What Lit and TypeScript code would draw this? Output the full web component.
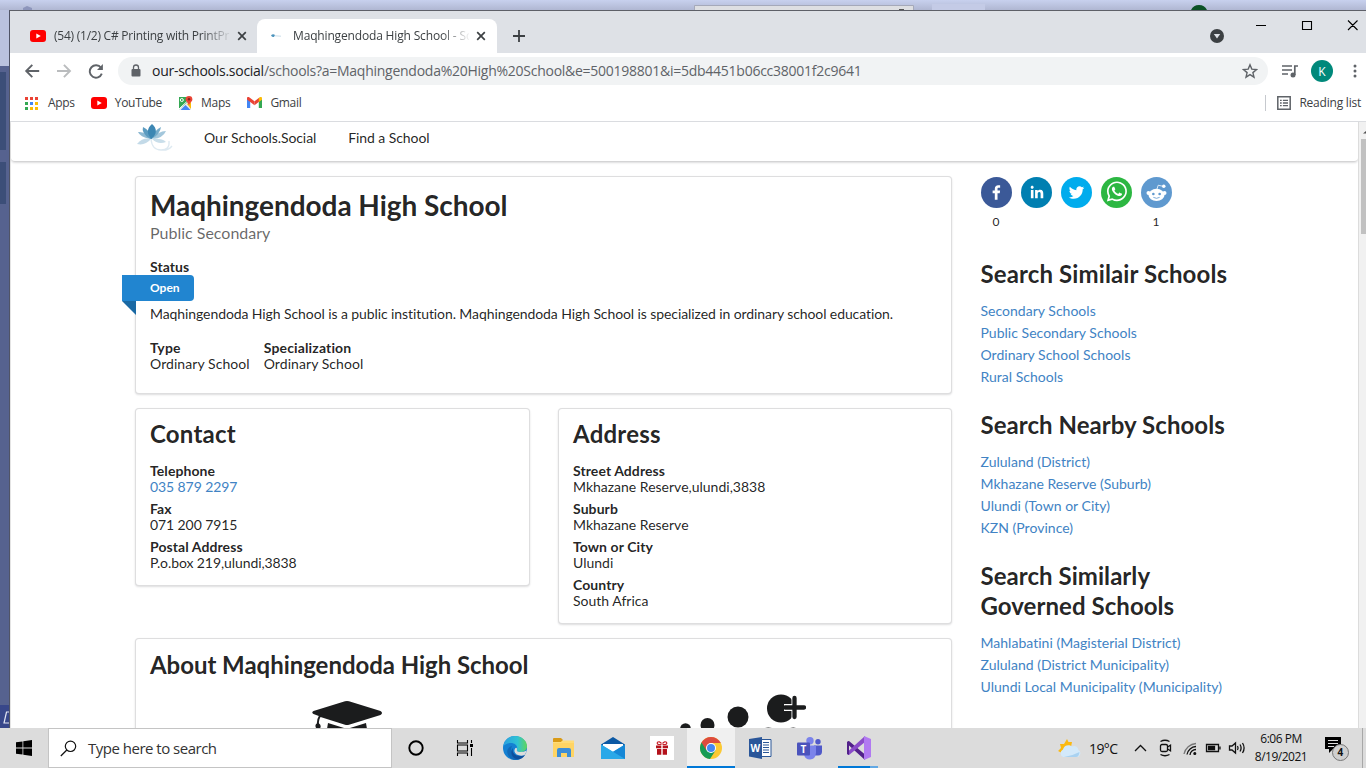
import { LitElement, html, css, svg } from "lit";
import { customElement } from "lit/decorators.js";

const youtube = html`<svg class="yt" width="16" height="12" viewBox="0 0 16 12"><rect width="16" height="12" rx="3" fill="#f00"/><path d="M6.3 3.4v5.2L10.8 6z" fill="#fff"/></svg>`;
const closeX = html`<svg width="10" height="10" viewBox="0 0 10 10"><path d="M1.2 1.2l7.6 7.6M8.8 1.2L1.2 8.8" stroke="#3c4043" stroke-width="1.7"/></svg>`;

@customElement("browser-tabs")
class BrowserTabs extends LitElement {
  static styles = css`
    :host { display: flex; height: 42px; background: #dee1e6; font: 12px "Open Sans", sans-serif; color: #3c4043; }
    .tab { display: flex; align-items: center; height: 34px; margin-top: 8px; box-sizing: border-box; }
    .first { width: 247px; padding-left: 20px; }
    .active { width: 240px; padding-left: 14px; background: #fff; border-radius: 8px 8px 0 0; }
    .title { width: 176px; margin-left: 8px; overflow: hidden; white-space: nowrap; letter-spacing: -0.24px; line-height: 20px;
      -webkit-mask-image: linear-gradient(90deg, #000 148px, transparent 178px); mask-image: linear-gradient(90deg, #000 148px, transparent 178px); }
    .active .title { margin-left: 6px; letter-spacing: -0.16px; }
    .x { display: flex; margin-left: 7px; }
    .plus { margin: 19px 0 0 16px; }
    .fill { flex: 1; }
    .round { margin: 18px 30px 0 0; }
    .caps { margin: 9px 8px 0 0; }
  `;
  render() {
    return html`
      <div class="tab first">${youtube}<span class="title">(54) (1/2) C# Printing with PrintPr</span><span class="x">${closeX}</span></div>
      <div class="tab active">
        <svg width="16" height="16" viewBox="0 0 16 16"><path d="M0 7.2Q2 5.6 4 7L3 9Q1 9.300 0 7.200z" fill="#4d94bd"/><path d="M4 7.800l6 .4" stroke="#c9dde9"/></svg>
        <span class="title">Maqhingendoda High School - So</span><span class="x">${closeX}</span>
      </div>
      <svg class="plus" width="12" height="12" viewBox="0 0 12 12"><path d="M6 0v12M0 6h12" stroke="#3c4043" stroke-width="1.8"/></svg>
      <span class="fill"></span>
      <svg class="round" width="14" height="14" viewBox="0 0 14 14"><circle cx="7" cy="7" r="7" fill="#3c4043"/><path d="M3.800 5h6.400L7 9.600z" fill="#dee1e6"/></svg>
      <svg class="caps" width="104" height="12" viewBox="0 0 104 12"><path d="M2 5.500h10M48.500 1.500h9v8h-9z M94 .5l9.500 9.500M103.500 .5L94 10" fill="none" stroke="#000" stroke-width="1.100"/></svg>
    `;
  }
}

@customElement("browser-bars")
class BrowserBars extends LitElement {
  static styles = css`
    :host { display: block; height: 68px; background: #fff; border-bottom: 1px solid #dadce0; font: 12px "Open Sans", sans-serif; color: #3c4043; }
    .toolbar { display: flex; align-items: center; height: 36px; }
    .toolbar svg { flex: none; }
    .nav { margin-left: 14px; }
    .omni { display: flex; align-items: center; width: 1150px; flex: none; height: 28px; border-radius: 14px; background: #f1f3f4; margin-left: 14px; box-sizing: border-box; padding: 0 10px 0 13px; }
    .url { margin-left: 11px; flex: 1; font-size: 14px; letter-spacing: -0.26px; color: #5f6368; line-height: 26px; white-space: nowrap; }
    .url b { font-weight: 400; color: #202124; }
    .music { margin-left: 14px; }
    .avatar { display: grid; place-items: center; width: 22px; height: 22px; border-radius: 50%; background: #00897b; color: #fff; margin-left: 12px; font-size: 12px; }
    .dots { margin-left: 19px; }
    .marks { display: flex; align-items: center; height: 28px; box-sizing: border-box; white-space: nowrap; line-height: 20px; }
    .marks svg { flex: none; }
    .apps { margin: 0 10px 0 15px; }
    .mark { display: flex; align-items: center; gap: 8px; letter-spacing: -0.3px; }
    .m1 { margin-left: 16px; }
    .m2 { margin-left: 16px; }
    .m3 { margin-left: 17px; }
    .fill { flex: 1; }
    .sep { width: 1px; height: 16px; background: #c6c9ce; margin-right: 11px; }
    .reading { display: flex; align-items: center; gap: 8px; margin-right: 5px; letter-spacing: -0.22px; }
  `;
  render() {
    const cols = ["#ea4335", "#ea4335", "#ea4335", "#34a853", "#4285f4", "#fbbc05", "#34a853", "#fbbc05", "#fbbc05"];
    return html`
      <div class="toolbar">
        <svg class="nav" width="64" height="16" viewBox="0 0 64 16"><g fill="none" stroke="#5f6368" stroke-width="1.900"><path d="M15.200 8H2.500M8.300 1.800L2.200 8l6.100 6.200"/><path d="M33 8h12.700M39.900 1.800L46 8l-6.100 6.200" stroke="#babcbe"/></g></svg>
        <svg width="16" height="16" viewBox="0 0 16 16"><path d="M13.200 4A6.200 6.200 0 1 0 14 9.800" transform="translate(-.2 .8)" fill="none" stroke="#5f6368" stroke-width="1.900"/><path d="M14.900 1v6H9z" fill="#5f6368"/></svg>
        <div class="omni">
          <svg width="10" height="14" viewBox="0 0 10 14"><rect x=".5" y="5" width="9" height="7.500" rx="1" fill="#5f6368"/><path d="M2.500 5.500V3.500a2.500 2.500 0 0 1 5 0v2" fill="none" stroke="#5f6368" stroke-width="1.300"/></svg>
          <span class="url"><b>our-schools.social</b>/schools?a=Maqhingendoda%20High%20School&amp;e=500198801&amp;i=5db4451b06cc38001f2c9641</span>
          <svg width="16" height="16" viewBox="0 0 16 16"><path d="M8 1.800l1.800 4.300 4.700.4-3.600 3.100 1.100 4.600-4-2.500-4 2.500 1.100-4.600-3.600-3.100 4.700-.4z" fill="none" stroke="#5f6368" stroke-width="1.400"/></svg>
        </div>
        <svg class="music" width="17" height="14" viewBox="0 0 17 14"><path d="M0 2h10M0 6h10M0 10h6M12.800 11V2H16" fill="none" stroke="#5f6368" stroke-width="1.700"/><circle cx="11" cy="11" r="2.500" fill="#5f6368"/></svg>
        <span class="avatar">K</span>
        <svg class="dots" width="6" height="16" viewBox="0 0 6 16"><g fill="#5f6368"><circle cx="3" cy="3" r="1.500"/><circle cx="3" cy="8" r="1.500"/><circle cx="3" cy="13" r="1.500"/></g></svg>
      </div>
      <div class="marks">
        <svg class="apps" width="13" height="13" viewBox="0 0 13 13">${cols.map((c, i) => svg`<rect x=${(i % 3) * 5} y=${Math.floor(i / 3) * 5} width="3" height="3" fill=${c}/>`)}</svg>
        <span class="mark">Apps</span>
        <span class="mark m1">${youtube}<span>YouTube</span></span>
        <span class="mark m2">
          <svg width="15" height="14" viewBox="0 0 15 14"><path d="M1 1h8v6L1 13.500z" fill="#34a853"/><path d="M1 13.500L12 4l1 9.500z" fill="#e8eaed"/><path d="M2.500 14l5-5 5 5z" fill="#4285f4"/><path d="M9 8l4 5V6z" fill="#fbbc05"/><path d="M1 13L9.500 5" stroke="#fff" stroke-width="1"/><circle cx="3.800" cy="4" r="1.500" fill="none" stroke="#fff"/><path d="M11 0a3.400 3.400 0 0 1 3.400 3.400C14.400 5.500 11.500 6.500 11 9.500 10.500 6.500 7.600 5.500 7.600 3.400A3.400 3.400 0 0 1 11 0z" fill="#ea4335"/><circle cx="11" cy="3.300" r="1.200" fill="#8a1f17"/></svg>
          <span>Maps</span></span>
        <span class="mark m3">
          <svg width="15" height="12" viewBox="0 0 15 12"><path d="M0 1.500V11h3.200V4z" fill="#4285f4"/><path d="M15 1.500V11h-3.200V4z" fill="#34a853"/><path d="M0 2.500V1.200C0 0 1.500-.2 2.500.5l5 3.800v3.900z" fill="#ea4335"/><path d="M7.500 4.300l5-3.800 .5 3.500-5.500 4.200z" fill="#ea4335"/><path d="M11.800 1v4.100L15 2.800V1.200C15 0 13.500-.2 12.500 .5z" fill="#fbbc05"/></svg>
          <span>Gmail</span></span>
        <span class="fill"></span>
        <span class="sep"></span>
        <span class="reading">
          <svg width="14" height="14" viewBox="0 0 14 14"><path d="M.8 .8h12.400v12.400H.8z" fill="none" stroke="#5f6368" stroke-width="1.500"/><path d="M3 4.300h1.700M3 7h1.700M3 9.700h1.700M5.900 4.300H11M5.900 7H11M5.900 9.700H11" stroke="#5f6368" stroke-width="1.300"/></svg>
          <span>Reading list</span></span>
      </div>`;
  }
}

@customElement("school-page")
class SchoolPage extends LitElement {
  static styles = css`
    :host { display: flex; height: 606px; overflow: hidden; background: #fff; font: 14px/16px Lato, sans-serif; font-variant-ligatures: none; color: rgba(0, 0, 0, 0.87); }
    .view { width: 1348px; box-sizing: border-box; border-left: 1px solid #e4e4e4; flex: none; }
    .menu { display: flex; align-items: center; height: 40px; box-sizing: border-box; border-bottom: 1px solid #d4d4d5; border-radius: 0 0 4px 4px; box-shadow: 0 1px 2px rgba(34, 36, 38, 0.15); padding: 0 0 8px 126px; letter-spacing: -0.08px; }
    .menu span { margin-left: 32px; line-height: 20px; white-space: nowrap; }
    .menu svg { margin-right: -1px; }
    .body { display: flex; padding: 14px 0 0 124px; gap: 28px; }
    .main { width: 817px; flex: none; }
    .card { box-sizing: border-box; border: 1px solid rgba(34, 36, 38, 0.15); border-radius: 4px; box-shadow: 0 1px 2px rgba(34, 36, 38, 0.15); padding: 14px; background: #fff; }
    .intro { height: 218px; }
    h1 { margin: -1px 0 0; font-size: 28px; line-height: 30px; font-weight: 700; letter-spacing: -0.05px; }
    .sub { font-size: 16px; line-height: 20px; color: rgba(0, 0, 0, 0.6); margin: 3px 0 16px; }
    b { font-weight: 700; display: block; letter-spacing: 0.08px; }
    .ribbon { position: relative; width: 72px; height: 26px; box-sizing: border-box; margin-left: -28px; padding-left: 28px; background: #2185d0; color: #fff; font-weight: 700; font-size: 12px; line-height: 26px; border-radius: 0 4px 4px 0; }
    .ribbon::after { content: ""; position: absolute; left: 0; top: 100%; border-style: solid; border-width: 0 14px 14px 0; border-color: transparent #1a69a4 transparent transparent; }
    p { margin: 3px 0 16px; line-height: 20px; white-space: nowrap; letter-spacing: -0.09px; }
    .facts { display: flex; gap: 14px; white-space: nowrap; letter-spacing: 0.07px; }
    .facts b { letter-spacing: 0.15px; }
    .pair { display: grid; grid-template-columns: 395px 394px; gap: 28px; align-items: start; margin: 14px 0; }
    .contact { letter-spacing: -0.09px; }
    h2 { margin: 0; font-size: 24px; line-height: 30px; font-weight: 700; letter-spacing: 0; }
    .card h2 { margin: -3px 0 13px; }
    .pair .card h2 { margin: -4px 0 14px; letter-spacing: 0.22px; }
    .about h2 { letter-spacing: -0.04px; }
    .item { margin-bottom: 6px; }
    .item:last-child { margin-bottom: 0; }
    a { color: #4183c4; }
    .about { height: 160px; }
    .pics { display: grid; grid-template-columns: 1fr 1fr; justify-items: center; }
    .people { margin: -3px 0 0 3px; }
    .side { width: 260px; padding-left: 0.5px; }
    .share { display: flex; gap: 9px; margin: 0 0 2px; }
    .btn { width: 31px; text-align: center; font-size: 12px; line-height: 27px; height: 57px; }
    .btn svg { display: block; margin-top: 0.5px; }
    .side h2 { margin: 22px 0 11px; letter-spacing: 0.05px; }
    .side h2.lead { margin-top: 26px; letter-spacing: 0.12px; }
    .links a { display: block; line-height: 22px; white-space: nowrap; letter-spacing: 0.02px; }
    .scroll { width: 8px; box-sizing: border-box; border-left: 1px solid #dcdcdc; background: #f1f1f1; padding: 17px 0 0 2px; flex: none; position: relative; }
    .thumb { height: 95px; background: #c1c1c1; }
    .arrow { position: absolute; left: 4px; top: 8px; }
  `;
  fields(rows: [string, unknown][]) {
    return rows.map(([k, v]) => html`<div class="item"><b>${k}</b>${v}</div>`);
  }
  links(rows: string[]) {
    return html`<div class="links">${rows.map((r) => html`<a>${r}</a>`)}</div>`;
  }
  shareButton(color: string, glyph: unknown, count = "") {
    return html`<div class="btn"><svg width="31" height="31" viewBox="0 0 64 64"><circle cx="32" cy="32" r="32" fill=${color}/>${glyph}</svg>${count}</div>`;
  }
  render() {
    return html`
      <div class="view">
        <div class="menu">
          <svg width="36" height="28" viewBox="0 0 36 28">
            <path d="M13 15Q3 13 1 8q7-1 12 7z" fill="#8db9d3"/><path d="M16 15Q26 14 29 7q-8 0-13 8z" fill="#a3c7dc"/>
            <path d="M13 15Q4 9 6 3q7 3 9 12z" fill="#5b9bc0"/><path d="M15 15Q23 10 24 3q-7 3-9 12z" fill="#76acca"/>
            <path d="M14.500 15Q7 7 15 0q8 7-.5 15z" fill="#3d87b3"/>
            <path d="M14 15Q6 13 0 20q8 2 14-5z" fill="#c3dae8"/><path d="M15 15q10-1 14 3-8 3-14-3z" fill="#c9deea"/>
            <path d="M14 15q1 11 10 11 9 0 8-9M24 26q7 1 11-4" fill="none" stroke="#dde9f1" stroke-width="1.300"/>
          </svg>
          <span>Our Schools.Social</span><span>Find a School</span>
        </div>
        <div class="body">
          <div class="main">
            <section class="card intro">
              <h1>Maqhingendoda High School</h1>
              <div class="sub">Public Secondary</div>
              <b>Status</b>
              <div class="ribbon">Open</div>
              <p>Maqhingendoda High School is a public institution. Maqhingendoda High School is specialized in ordinary school education.</p>
              <div class="facts"><div><b>Type</b>Ordinary School</div><div><b>Specialization</b>Ordinary School</div></div>
            </section>
            <div class="pair">
              <section class="card contact"><h2>Contact</h2>${this.fields([["Telephone", html`<a>035 879 2297</a>`], ["Fax", "071 200 7915"], ["Postal Address", "P.o.box 219,ulundi,3838"]])}</section>
              <section class="card"><h2>Address</h2>${this.fields([["Street Address", "Mkhazane Reserve,ulundi,3838"], ["Suburb", "Mkhazane Reserve"], ["Town or City", "Ulundi"], ["Country", "South Africa"]])}</section>
            </div>
            <section class="card about">
              <h2>About Maqhingendoda High School</h2>
              <div class="pics">
                <svg class="cap" width="72" height="60" viewBox="0 0 72 60"><g fill="#1b1c1d"><path d="M34 8.300Q36 7.600 38 8.300L69.500 18q3 2 0 4L38 31.800q-2 .6-4 0L9.500 24q-2 3-1.500 6.500 2.500 1.500 1.300 4.500L12 48H3l2-13q-1.500-3 .8-4.500.2-5 2-7.500L2.500 21q-2.500-1.500 0-3z"/><path d="M17 30l17 5.300q2 .6 4 0L55 30l2 12q-10 8-21 8t-21-8z"/></g></svg>
                <svg class="people" width="128" height="60" viewBox="0 0 128 60"><g fill="#1b1c1d"><circle cx="7.500" cy="38.500" r="5.300"/><circle cx="29.500" cy="35" r="7"/><circle cx="60" cy="27" r="10.500"/><circle cx="103" cy="18.500" r="14"/><path d="M82 58V42q4-6 12-4 9 4 18 0 7-2 10 4v16z"/></g><path d="M117 7v21M106 17.500h21" stroke="#fff" stroke-width="7"/><path d="M116.500 8v19M107 17.500h19" stroke="#1b1c1d" stroke-width="4.300" stroke-linecap="round"/></svg>
              </div>
            </section>
          </div>
          <aside class="side">
            <div class="share">
              ${this.shareButton("#3b5998", svg`<path fill="#fff" d="M34.1,47V33.3h4.6l0.7-5.3h-5.3v-3.4c0-1.5,0.4-2.6,2.6-2.6l2.8,0v-4.8c-0.5-0.1-2.2-0.2-4.1-0.2c-4.1,0-6.9,2.5-6.9,7V28H24v5.3h4.5V47H34.1z"/>`, "0")}
              ${this.shareButton("#007fb1", svg`<path fill="#fff" d="M20.4,44h5.4V26.6h-5.4V44z M23.1,18c-1.7,0-3.1,1.4-3.1,3.1c0,1.7,1.4,3.1,3.1,3.1c1.7,0,3.1-1.4,3.1-3.1C26.2,19.4,24.8,18,23.1,18z M39.5,26.2c-2.6,0-4.4,1.4-5.1,2.8h-0.1v-2.4h-5.2V44h5.4v-8.6c0-2.3,0.4-4.5,3.2-4.5c2.8,0,2.8,2.6,2.8,4.6V44H46v-9.5C46,29.8,45,26.2,39.5,26.2z"/>`)}
              ${this.shareButton("#00aced", svg`<path fill="#fff" d="M48,22.1c-1.2,0.5-2.4,0.9-3.8,1c1.4-0.8,2.4-2.1,2.9-3.6c-1.3,0.8-2.7,1.3-4.2,1.6C41.7,19.8,40,19,38.2,19c-3.6,0-6.6,2.9-6.6,6.6c0,0.5,0.1,1,0.2,1.5c-5.5-0.3-10.3-2.9-13.5-6.9c-0.6,1-0.9,2.1-0.9,3.3c0,2.3,1.2,4.3,2.9,5.5c-1.1,0-2.1-0.3-3-0.8c0,0,0,0.1,0,0.1c0,3.2,2.3,5.8,5.3,6.4c-0.6,0.1-1.1,0.2-1.7,0.2c-0.4,0-0.8,0-1.2-0.1c0.8,2.6,3.3,4.5,6.1,4.6c-2.2,1.8-5.1,2.8-8.2,2.8c-0.5,0-1.1,0-1.6-0.1c2.9,1.9,6.4,2.9,10.1,2.9c12.1,0,18.7-10,18.7-18.7c0-0.3,0-0.6,0-0.8C46,24.5,47.1,23.4,48,22.1z"/>`)}
              ${this.shareButton("#2cb742", svg`<path fill="#fff" d="m42.32286,33.93287c-0.5178,-0.2589 -3.04726,-1.49644 -3.52105,-1.66732c-0.4712,-0.17346 -0.81554,-0.2589 -1.15987,0.2589c-0.34175,0.51004 -1.33075,1.66474 -1.63108,2.00648c-0.30032,0.33658 -0.60064,0.36247 -1.11327,0.12945c-0.5178,-0.2589 -2.17994,-0.80259 -4.14759,-2.56312c-1.53269,-1.37217 -2.56312,-3.05503 -2.86603,-3.57283c-0.30033,-0.5178 -0.03366,-0.80259 0.22524,-1.06149c0.23301,-0.23301 0.5178,-0.59547 0.7767,-0.90616c0.25372,-0.31068 0.33657,-0.5178 0.51262,-0.85437c0.17088,-0.36246 0.08544,-0.64725 -0.04402,-0.90615c-0.12945,-0.2589 -1.15987,-2.79613 -1.58964,-3.80584c-0.41424,-1.00971 -0.84142,-0.88027 -1.15987,-0.88027c-0.29773,-0.02588 -0.64208,-0.02588 -0.98382,-0.02588c-0.34693,0 -0.90616,0.12945 -1.37736,0.62136c-0.4712,0.5178 -1.80194,1.76053 -1.80194,4.27186c0,2.51134 1.84596,4.94554 2.10227,5.30001c0.2589,0.33657 3.63497,5.51458 8.80262,7.74113c1.23237,0.5178 2.1903,0.82848 2.94111,1.08738c1.23237,0.38836 2.35599,0.33657 3.24402,0.20712c0.99159,-0.15534 3.04985,-1.24272 3.47963,-2.45956c0.44013,-1.21683 0.44013,-2.22654 0.31068,-2.45955c-0.12945,-0.23301 -0.46601,-0.36247 -0.98382,-0.59548m-9.40068,12.84407l-0.02589,0c-3.05503,0 -6.08417,-0.82849 -8.72495,-2.38189l-0.62136,-0.37023l-6.47252,1.68286l1.73463,-6.29129l-0.41424,-0.64725c-1.70875,-2.71846 -2.6149,-5.85116 -2.6149,-9.07706c0,-9.39809 7.68934,-17.06155 17.15993,-17.06155c4.58253,0 8.88029,1.78642 12.11655,5.02268c3.23625,3.21036 5.02267,7.50812 5.02267,12.06476c-0.0078,9.3981 -7.69712,17.06155 -17.14699,17.06155m14.58906,-31.58846c-3.93529,-3.80584 -9.1133,-5.95471 -14.62789,-5.95471c-11.36055,0 -20.60848,9.2065 -20.61625,20.52564c0,3.61684 0.94757,7.14565 2.75211,10.26282l-2.92557,10.63564l10.93337,-2.85309c3.0136,1.63108 6.4052,2.4958 9.85634,2.49839l0.01037,0c11.36574,0 20.61884,-9.2091 20.62403,-20.53082c0,-5.48093 -2.14111,-10.64081 -6.03239,-14.51915"/>`)}
              ${this.shareButton("#5f99cf", svg`<g fill="#fff"><ellipse cx="32" cy="37" rx="16.500" ry="12.500"/><circle cx="15.500" cy="33" r="4.200"/><circle cx="48.500" cy="33" r="4.200"/><circle cx="47" cy="19" r="3.600"/></g><path d="M33 25l2.500-8 9 2" fill="none" stroke="#fff" stroke-width="1.600"/><g fill="#5f99cf"><circle cx="25.500" cy="35" r="2.700"/><circle cx="38.500" cy="35" r="2.700"/></g><path d="M25.500 42q6.500 4 13 0" fill="none" stroke="#5f99cf" stroke-width="1.700"/>`, "1")}
            </div>
            <h2 class="lead">Search Similair Schools</h2>
            ${this.links(["Secondary Schools", "Public Secondary Schools", "Ordinary School Schools", "Rural Schools"])}
            <h2>Search Nearby Schools</h2>
            ${this.links(["Zululand (District)", "Mkhazane Reserve (Suburb)", "Ulundi (Town or City)", "KZN (Province)"])}
            <h2>Search Similarly<br>Governed Schools</h2>
            ${this.links(["Mahlabatini (Magisterial District)", "Zululand (District Municipality)", "Ulundi Local Municipality (Municipality)"])}
          </aside>
        </div>
      </div>
      <div class="scroll"><div class="thumb"></div><svg class="arrow" width="4" height="4" viewBox="0 0 4 4"><path d="M0 3.500L4 0v3.500z" fill="#505050"/></svg></div>`;
  }
}

@customElement("task-bar")
class TaskBar extends LitElement {
  static styles = css`
    :host { display: flex; height: 40px; background: #dcdcdc; font: 12px "Open Sans", sans-serif; color: #111; }
    .start { width: 48px; display: grid; place-items: center; }
    .search { width: 344px; box-sizing: border-box; border: 1px solid #c4c4c4; background: #fff; display: flex; align-items: center; padding-left: 11px; font-size: 15px; letter-spacing: -0.5px; color: #333; }
    .search span { margin-left: 11px; white-space: nowrap; }
    .sys, .app { display: grid; place-items: center; width: 48px; }
    .app { width: 49px; box-sizing: border-box; }
    .gap { width: 2px; }
    .on { width: 48px; margin-left: 1px; background: #f0f0f0; border-bottom: 2px solid #0078d7; padding-top: 2px; }
    .word { margin-left: 1px; }
    .vs { background: linear-gradient(90deg, #0078d7 32px, #62a8e4 32px) 4px 38px / 40px 2px no-repeat; }
    .fill { flex: 1; }
    .weather { width: 24px; align-self: center; margin: 1px 8px 0 0; }
    .temp { font-size: 14px; line-height: 40px; width: 43px; letter-spacing: -0.6px; white-space: nowrap; padding-top: 1px; }
    .tray { align-self: center; }
    .clock { width: 66px; text-align: center; line-height: 18px; padding-top: 2px; letter-spacing: -0.5px; white-space: nowrap; }
    .note { align-self: center; margin: 2px 13px 0 10px; }
    .edge { width: 4px; box-sizing: border-box; border-left: 1px solid #a8a8a8; }
    .glyph { font: 700 10px "Open Sans", sans-serif; fill: #fff; }
    .badge { font: 700 10px "Open Sans", sans-serif; fill: #111; }
  `;
  render() {
    return html`
      <div class="start"><svg width="16" height="16" viewBox="0 0 16 16"><path d="M0 2.300l6.500-.9v6.100H0zM7.300 1.200L16 0v7.500H7.300zM0 8.400h6.500v6.200L0 13.700zM7.300 8.400H16V16l-8.700-1.300z"/></svg></div>
      <div class="search"><svg width="17" height="17" viewBox="0 0 17 17"><circle cx="10.500" cy="6.300" r="5.200" fill="none" stroke="#111" stroke-width="1.200"/><path d="M6.800 10L.8 16" stroke="#111" stroke-width="1.200"/></svg><span>Type here to search</span></div>
      <div class="sys"><svg width="16" height="16" viewBox="0 0 16 16"><circle cx="8" cy="8" r="6.700" fill="none" stroke="#000" stroke-width="1.900"/></svg></div>
      <div class="sys"><svg width="17" height="16" viewBox="0 0 17 16"><path d="M1.500 0v3h10V0M1.500 16v-3h10v3M1.500 5h10v6h-10zM15.500 0v3M15.500 8v8" fill="none" stroke="#000" stroke-width="1.100"/><path d="M14 4h3v3h-3z"/></svg></div>
      <div class="gap"></div>
      <div class="app"><svg width="24" height="24" viewBox="0 0 24 24"><defs><linearGradient id="e1" x1="0" x2="1"><stop stop-color="#2a9fe0"/><stop offset=".6" stop-color="#2fc2d4"/><stop offset="1" stop-color="#5fd65a"/></linearGradient></defs><circle cx="12" cy="12" r="12" fill="#1480d2"/><path d="M0 11C1 4 6 0 12 0c7 0 12 5 12 10 0 4-3 6-7 6-3 0-4-1-3-3 1-3-2-6-6-6-4 0-7 2-8 4z" fill="url(#e1)"/><path d="M9 10c-3 6 1 13 8 13-4 2-10 1-12-4-2-4 0-8 4-9z" fill="#1069b8"/><path d="M10 12c-2 6 5 10 12 7-2 4-7 5-10 3.500C8 20 7 15 10 12z" fill="#0e4f9e"/><path d="M14 13q-1 3 3 3 4 0 6.600-1.500-.5 2.500-2 4.500-4 1.500-8-.5-3.500-3-1.500-6 1.500-1.500 1.900.5z" fill="#dcdcdc"/></svg></div>
      <div class="app"><svg width="21" height="20" viewBox="0 0 21 20"><path d="M0 3V1h8l2 2h11v16H0z" fill="#ffd463"/><path d="M0 1q0-1 1-1h7l2 2-2 2H0z" fill="#d99a16"/><path d="M0 4h8l2-1.500h11V5H0z" fill="#ffdc78"/><path d="M4 19v-7q0-2 2-2h10q2 0 2 2v7h-4v-4H8v4z" fill="#3d8ed6"/></svg></div>
      <div class="app"><svg width="24" height="22" viewBox="0 0 24 22"><path d="M0 7.500L12 0l12 7.500V9H0z" fill="#0c59a4"/><path d="M2 7h20v8H2z" fill="#fff"/><path d="M0 7.500L12 15 24 7.500V22H0z" fill="#35b5f1"/><path d="M0 22L24 7.500V22z" fill="#1587d6"/><path d="M0 7.500L24 22H0z" fill="#2aa8e8"/></svg></div>
      <div class="app"><svg width="24" height="24" viewBox="0 0 24 24"><path fill="#fff" d="M0 0h24v24H0z"/><path d="M6 9.500h5.300v2.700H6zM12.700 9.500H18v2.700h-5.300zM7 12.900h4.300v5.800H7zM12.700 12.900H17v5.800h-4.300z" fill="#b4121b"/><path d="M11.500 8.500H8.300q-1.600-.8-.8-2.200 1.800-1.500 4 1.200M12.500 8.500h3.200q1.600-.8.8-2.200-1.800-1.500-4 1.200" fill="none" stroke="#c8202a" stroke-width="1.200"/></svg></div>
      <div class="app on"><svg width="22" height="22" viewBox="0 0 22 22"><circle cx="11" cy="11" r="11" fill="#fbc934"/><path d="M11 11L1.500 5.500A11 11 0 0 0 10 22l5.500-8.500z" fill="#179b55"/><path d="M1.500 5.500A11 11 0 0 1 20.500 5.500L20.800 6H11L6.500 13.500z" fill="#dd4b3e"/><circle cx="11" cy="11" r="5" fill="#fff"/><circle cx="11" cy="11" r="4" fill="#4587f2"/></svg></div>
      <div class="app word"><svg width="23" height="24" viewBox="0 0 23 24"><path d="M12 3.500h10v17H12z" fill="#fff" stroke="#2b5797" stroke-width="1"/><path d="M14 6.500h6M14 9h6M14 11.500h6M14 14h6M14 16.500h6" stroke="#2b5797"/><path d="M0 3l13-2v22L0 20.500z" fill="#2a5699"/><text class="glyph" x="1.500" y="15.700">W</text></svg></div>
      <div class="app"><svg width="25" height="23" viewBox="0 0 25 23"><circle cx="13" cy="3.800" r="3.700" fill="#7b83eb"/><circle cx="21" cy="4.800" r="2.700" fill="#5059c9"/><path d="M17 8.500h8v6q0 4-4 4h-4z" fill="#5059c9"/><path d="M7 8.500h12v7q-.5 7-6 7-5 0-6-5z" fill="#7b83eb"/><rect y="5.500" width="13" height="13" rx="1" fill="#4b53bc"/><text class="glyph" x="3.500" y="15.500">T</text></svg></div>
      <div class="app vs"><svg width="24" height="24" viewBox="0 0 24 24"><path d="M0 6l2-1 16 13.500V24L2 9.500V15L0 18z" fill="#52218a"/><path d="M0 18l2 1L18 6V0L2 14.500z" fill="#8a4bc9"/><path d="M0 6l2-1v14l-2-1z" fill="#52218a"/><path d="M17 0l7 3v18l-7 3z" fill="#b179f1"/></svg></div>
      <span class="fill"></span>
      <svg class="weather" width="22" height="20" viewBox="0 0 22 20"><path d="M9 0l1.500 3L14 3l-1 5 2 5-9 2-6-3 3-3-1-4 4 0z" fill="#fbb912"/><path d="M5.500 18a4 4 0 0 1-.5-7.500 5.500 5.500 0 0 1 9-3 4.500 4.500 0 0 1 6.500 3.500A3.800 3.800 0 0 1 18 18z" fill="#d3e9fa"/><path d="M6 18q8-1 15.500-5-.5 5-3.500 5z" fill="#a9d2f1"/></svg>
      <span class="temp">19°C</span>
      <svg class="tray" width="116" height="20" viewBox="0 0 116 20"><g fill="none" stroke="#111" stroke-width="1.300">
        <path d="M3 13l5.500-5.500L14 13"/><rect x="28.500" y="6.500" width="7" height="7" rx="1.500"/><path d="M35.500 9l3-1.800v5.600l-3-1.800M28.500 3.500q4.500-2.500 9 0M28.500 16.500q4.500 2.500 9 0"/>
        <path d="M52 16A13 13 0 0 1 64 5.500" stroke="#777"/><path d="M55 16.500A9.500 9.500 0 0 1 64 8.500"/><path d="M58 17A6 6 0 0 1 64 11.500"/><circle cx="62.800" cy="15.500" r=".9" fill="#111"/>
        <path d="M74.500 6.500h12v7h-12zM88 8.500v3"/><path d="M76.500 8.500h6v3h-6z" fill="#111"/>
        <path d="M97.500 8h2.500l3.500-3v10L100 12h-2.500zM105.500 8q1.200 2 0 4M108 6.500q2.200 3.500 0 7M110.500 5q3.200 5 0 10"/></g></svg>
      <div class="clock">6:06 PM<br>8/19/2021</div>
      <svg class="note" width="25" height="26" viewBox="0 0 25 26"><path d="M1 1h16v12H9l-4 4v-4H1z" fill="#000"/><path d="M4 4.500h10M4 7.500h10M4 10.500h6" stroke="#ddd" stroke-width="1.100"/><circle cx="16.500" cy="16.500" r="8" fill="#cfcfcf" stroke="#777"/><text class="badge" x="13.600" y="20">4</text></svg>
      <span class="edge"></span>`;
  }
}

@customElement("app-root")
class AppRoot extends LitElement {
  static styles = css`
    :host { display: grid; grid-template-rows: 728px 40px; width: 1366px; height: 768px; overflow: hidden; }
    .desk { display: grid; grid-template-columns: 9px 1357px; grid-template-rows: 10px 718px; background: #c7d0ec; overflow: hidden; }
    .strip { grid-column: 1 / 3; display: block; }
    .left { display: block; }
    .window { border-top: 1px solid #5e6068; border-left: 1px solid #505466; box-sizing: border-box; overflow: hidden; }
  `;
  render() {
    return html`
      <div class="desk">
        <svg class="strip" width="1366" height="10" viewBox="0 0 1366 10"><defs><linearGradient id="g" x2="0" y2="1"><stop stop-color="#c8d1ee"/><stop offset="1" stop-color="#b0b7d2"/></linearGradient></defs><rect width="1366" height="10" fill="url(#g)"/><path d="M23 10v-2l4-2 5 2v2z" fill="#8d95bb"/><path d="M694.500 10V5.500h219V10" fill="#dedfe2" stroke="#a5a9b9"/><path d="M899 9.500h5" stroke="#555"/><path d="M932 4h53v6h-53z" fill="#c4cbe6"/><path d="M1191 10a9 9 0 0 1 16 0z" fill="#0c5226"/></svg>
        <svg class="left" width="9" height="718" viewBox="0 0 9 718"><path d="M0 0h9v56H0z" fill="#bac2de"/><path d="M0 56h9v639H0z" fill="#56628f"/><path d="M0 62h6v78H0zM0 152h6v42H0z" fill="#3c4e78"/><path d="M0 695h9v23H0z" fill="#38478a"/><path d="M9 702H6.500L4 713h5" fill="none" stroke="#e3e6f2" stroke-width="1.200"/></svg>
        <div class="window"><browser-tabs></browser-tabs><browser-bars></browser-bars><school-page></school-page></div>
      </div>
      <task-bar></task-bar>`;
  }
}
